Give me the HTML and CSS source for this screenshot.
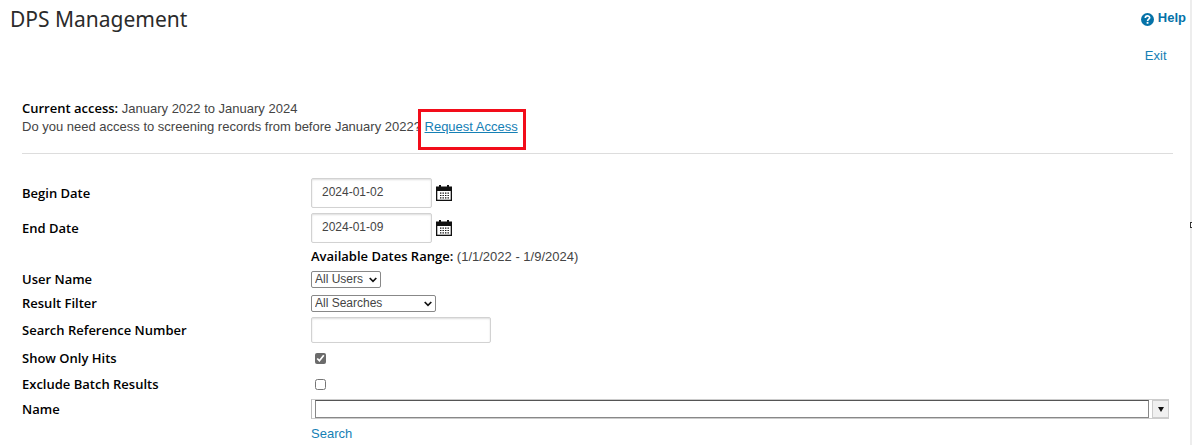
FILE: index.html
```html
<!DOCTYPE html>
<html lang="en">
  <head>
    <meta charset="UTF-8" />
    <meta name="viewport" content="width=device-width, initial-scale=1.0" />
    <title>DPS Management</title>
    <link rel="stylesheet" href="styles.css">
  </head>
  <body>
    <div id="wrap">
      <header class="header">
        <h1>DPS Management</h1>
        <nav class="header-links">
          <a href="#" class="help-link">
            <svg width="13" height="13" viewBox="0 0 12 12" aria-hidden="true">
              <circle cx="6" cy="6" r="6" fill="#0572a8" />
              <path d="M4 4.7C4 2 8 2.1 8 4.4C8 5.8 6.1 5.6 6.1 7.3" fill="none" stroke="#fff" stroke-width="1.6" />
              <rect x="5.2" y="8.2" width="1.7" height="1.7" fill="#fff" />
            </svg>
            Help
          </a>
          <a href="#" class="exit-link">Exit</a>
        </nav>
      </header>

      <main class="content">
        <section class="access">
          <p><b>Current access:</b> January 2022 to January 2024</p>
          <p>Do you need access to screening records from before January 2022? <a href="#" class="request-link">Request Access</a></p>
        </section>

        <form class="filters">
          <div class="row row-date">
            <label for="beginDate">Begin Date</label>
            <div class="field">
              <input type="text" class="text-box date" id="beginDate" value="2024-01-02" />
              <button type="button" class="cal-btn" aria-label="Pick begin date">
                <svg width="16" height="16" viewBox="0 0 16 16">
                  <path d="M0 1.5H3V0H5V1.5H11V0H13V1.5H16V16H0Z" fill="#111" />
                  <path d="M1.3 6H14.7V14.7H1.3Z" fill="#fff" />
                  <path d="M4 8.2H13M4 10.5H13M4 12.8H13" stroke="#111" stroke-width="1.2" stroke-dasharray="1.4 1.1" />
                </svg>
              </button>
            </div>
          </div>
          <div class="row row-date">
            <label for="endDate">End Date</label>
            <div class="field">
              <input type="text" class="text-box date" id="endDate" value="2024-01-09" />
              <button type="button" class="cal-btn" aria-label="Pick end date">
                <svg width="16" height="16" viewBox="0 0 16 16">
                  <path d="M0 1.5H3V0H5V1.5H11V0H13V1.5H16V16H0Z" fill="#111" />
                  <path d="M1.3 6H14.7V14.7H1.3Z" fill="#fff" />
                  <path d="M4 8.2H13M4 10.5H13M4 12.8H13" stroke="#111" stroke-width="1.2" stroke-dasharray="1.4 1.1" />
                </svg>
              </button>
            </div>
          </div>
          <div class="row row-range">
            <p class="field-text"><b>Available Dates Range:</b> (1/1/2022 - 1/9/2024)</p>
          </div>
          <div class="row">
            <label for="userName">User Name</label>
            <div class="select-box select-user">
              <select id="userName">
                <option>All Users</option>
              </select>
              <svg width="8" height="6" viewBox="0 0 8 6"><path d="M0.7 1L4 4.3L7.3 1" /></svg>
            </div>
          </div>
          <div class="row">
            <label for="resultFilter">Result Filter</label>
            <div class="select-box select-filter">
              <select id="resultFilter">
                <option>All Searches</option>
              </select>
              <svg width="8" height="6" viewBox="0 0 8 6"><path d="M0.7 1L4 4.3L7.3 1" /></svg>
            </div>
          </div>
          <div class="row row-ref">
            <label for="refNumber">Search Reference Number</label>
            <input type="text" class="text-box ref" id="refNumber" />
          </div>
          <div class="row row-check">
            <label for="onlyHits">Show Only Hits</label>
            <input type="checkbox" id="onlyHits" checked />
          </div>
          <div class="row row-check">
            <label for="excludeBatch">Exclude Batch Results</label>
            <input type="checkbox" id="excludeBatch" />
          </div>
          <div class="row">
            <label for="name">Name</label>
            <div class="combo">
              <input type="text" id="name" />
              <button type="button" aria-label="Show names">
                <svg width="6" height="5" viewBox="0 0 6 5"><path d="M0 0H6L3 5Z" fill="#111" /></svg>
              </button>
            </div>
          </div>
          <div class="row row-check">
            <a href="#" class="search-link">Search</a>
          </div>
        </form>
      </main>
      <span class="handle"></span>
    </div>
  </body>
</html>
```
FILE: styles.css
```css
* {
  margin: 0;
  padding: 0;
  box-sizing: border-box;
}
body {
  font-family: "Liberation Sans", Arial, sans-serif;
  font-size: 13px;
  line-height: 18px;
  color: #444;
  background: #fff;
}
#wrap {
  position: relative;
  min-height: 100vh;
  border-right: 2px solid #ededed;
}
a {
  color: #1580b5;
  text-decoration: none;
}
b,
label {
  font-family: "Open Sans", "Noto Sans", sans-serif;
  font-size: 13px;
  font-weight: 600;
  color: #000;
}
input,
select,
button {
  font-family: inherit;
  font-size: 12px;
  color: #444;
}

/* header */
.header {
  display: flex;
  justify-content: space-between;
  padding: 4px 4px 0 10px;
}
.header h1 {
  font-family: "Noto Sans", "Open Sans", sans-serif;
  font-size: 21px;
  font-weight: 400;
  line-height: 30px;
  color: #2b2b2b;
}
.header-links {
  display: flex;
  flex-direction: column;
  gap: 20px;
  padding-top: 5px;
}
.help-link {
  display: flex;
  align-items: center;
  gap: 4px;
  font-weight: 700;
  color: #0572a8;
}
.help-link svg {
  margin-top: 3px;
}
.exit-link {
  padding-left: 4px;
}

/* content */
.content {
  padding: 34px 17px 0 22px;
}
.access {
  padding-bottom: 17px;
  border-bottom: 1px solid #ddd;
}
.request-link {
  position: relative;
  text-decoration: underline;
}
.request-link::after {
  content: "";
  position: absolute;
  top: -10px;
  left: -7px;
  right: -8px;
  height: 41px;
  box-sizing: border-box;
  border: 3px solid #f20d1a;
}
.filters {
  padding-top: 21px;
}
.row {
  display: grid;
  grid-template-columns: 289px 1fr;
  align-items: center;
  min-height: 24px;
}
.row-date {
  min-height: 35px;
}
.row-range {
  min-height: 22px;
}
.row-ref {
  min-height: 30px;
}
.row-check {
  min-height: 26px;
}
.field {
  display: flex;
  align-items: center;
  gap: 4px;
}
.field-text,
.search-link {
  grid-column: 2;
}
.text-box {
  border: 1px solid #d2d2d2;
  border-radius: 2px;
  background: #fff;
  box-shadow: inset 0 1px 2px #ddd;
}
.date {
  width: 121px;
  height: 30px;
  padding: 0 10px 2px;
}
.ref {
  width: 180px;
  height: 26px;
}
.cal-btn {
  display: flex;
  border: 0 none;
  background: transparent;
}

/* dropdowns */
.select-box {
  position: relative;
  height: 17px;
}
.select-user {
  width: 70px;
}
.select-filter {
  width: 125px;
}
.select-box select {
  display: block;
  width: 100%;
  height: 100%;
  padding-left: 3px;
  border: 1px solid #888;
  border-radius: 2px;
  background: #fff;
  line-height: 15px;
  appearance: none;
}
.select-box svg {
  position: absolute;
  top: 6px;
  right: 4px;
  fill: none;
  stroke: #111;
  stroke-width: 1.7;
  pointer-events: none;
}
input[type="checkbox"] {
  width: 11px;
  height: 11px;
  margin-left: 4px;
  accent-color: #6b6b6b;
}

/* name combo */
.combo {
  display: flex;
  gap: 3px;
  height: 20px;
  margin-right: 4px;
  padding-left: 3px;
  border-left: 1px solid #bbb;
  border-top: 1px solid #ccc;
  border-bottom: 1px solid #ccc;
}
.combo input {
  flex: 1;
  min-width: 0;
  padding: 0 4px;
  border: 1px solid #888;
  border-top-color: #555;
}
.combo button {
  display: flex;
  align-items: center;
  justify-content: center;
  width: 17px;
  border: 1px solid #ccc;
  background: #f0f0f0;
}

/* resize handle on the page edge */
.handle {
  position: absolute;
  top: calc(50% - 2px);
  right: -2px;
  width: 2px;
  height: 6px;
  border: 1px solid #333;
  border-right: 0 none;
  background: #fff;
}
```
